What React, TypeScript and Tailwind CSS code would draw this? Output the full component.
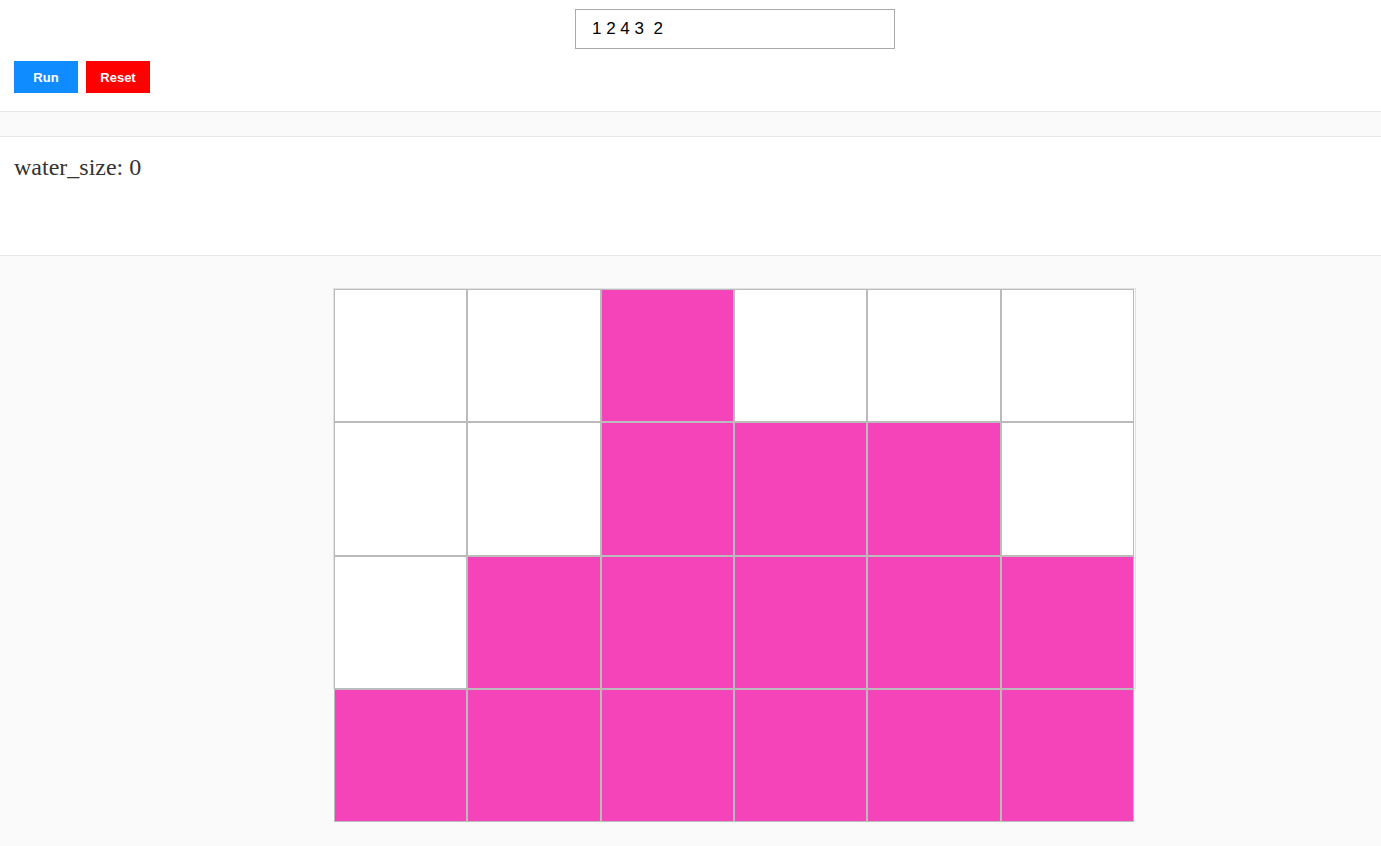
import { useState } from 'react';

const HEIGHTS = [1, 2, 4, 3, 3, 2];
const ROWS = 4;

const App = () => {
    const [value, setValue] = useState('1 2 4 3  2');

    return (
        <div className="min-h-screen bg-[#fafafa]" style={{ fontFamily: '"Liberation Sans", Arial, sans-serif' }}>

            {/* controls */}
            <div className="bg-white pt-[9px] pb-[18px] border-b border-[#e6e6e6]">
                <div className="flex justify-center pl-[89px]">
                    <input
                        value={value}
                        onChange={e => setValue(e.target.value)}
                        className="w-[320px] h-[40px] border border-[#aaaaaa] px-4 text-[17px] text-black outline-none"
                    />
                </div>
                <div className="flex gap-2 px-[14px] mt-[12px]">
                    <button className="w-16 h-8 pt-px bg-[#0f8cff] text-white text-[13px] font-bold">Run</button>
                    <button className="w-16 h-8 pt-px bg-[#ff0000] text-white text-[13px] font-bold">Reset</button>
                </div>
            </div>

            <div className="h-[25px] border-b border-[#e6e6e6]" />

            {/* result */}
            <div className="bg-white h-[119px] border-b border-[#e6e6e6] px-[14px] pt-[12px]">
                <span className="text-[24px] text-[#333333]" style={{ fontFamily: '"Liberation Serif", "Times New Roman", serif' }}>
                    water_size: 0
                </span>
            </div>

            {/* grid */}
            <div className="pl-[333px] pt-[32px] pb-6">
                <div className="w-[803px] h-[401px] border border-[#e2e2e2]">
                    <div className="grid grid-cols-6 w-[800px]">
                        {Array.from({ length: ROWS }).map((_, r) =>
                            HEIGHTS.map((h, c) => (
                                <div
                                    key={`${r}-${c}`}
                                    className={
                                        r >= ROWS - h
                                            ? 'h-[133.33px] border border-[#bbbbbb] bg-[#f543b9]'
                                            : 'h-[133.33px] border border-[#bbbbbb] bg-white'
                                    }
                                />
                            ))
                        )}
                    </div>
                </div>
            </div>
        </div>
    );
};

export default App;
